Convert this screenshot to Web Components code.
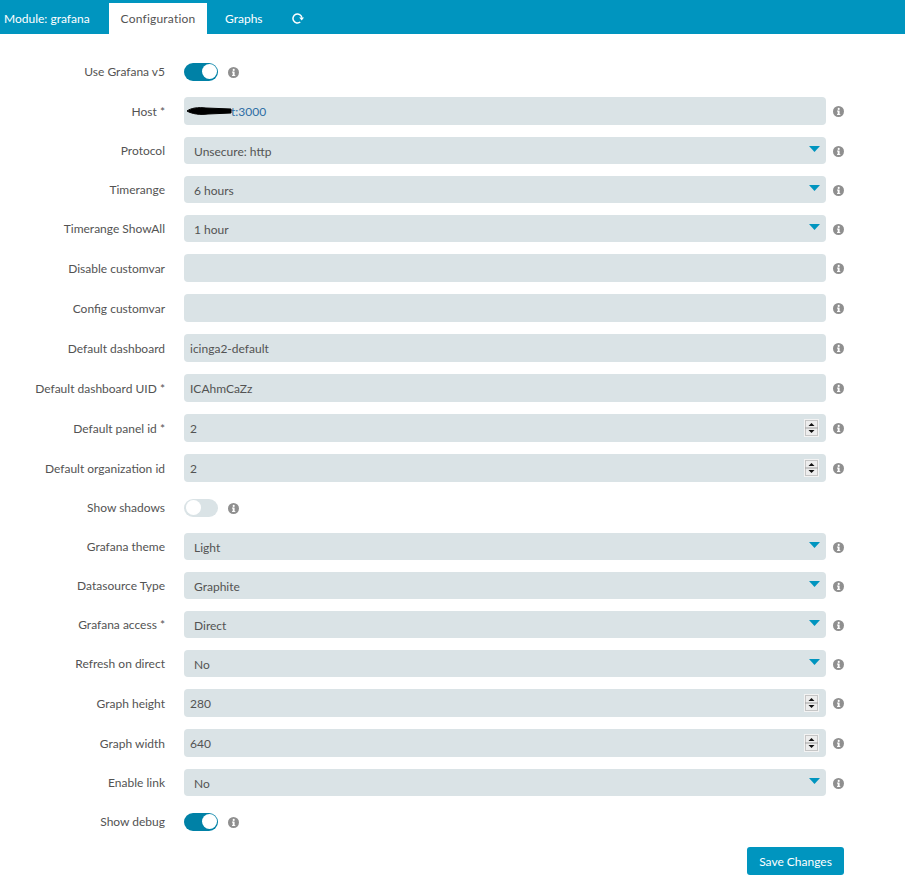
<!DOCTYPE html>
<html>
<head>
<meta charset="utf-8">
<title>Module: grafana</title>
<style>
    html, body { margin: 0; padding: 0; background: #fff; }
    body { font-family: Lato, "Open Sans", sans-serif; font-size: 12px; color: #535353; }
</style>
</head>
<body>
<module-tabs></module-tabs>
<config-form>
    <form-row label="Use Grafana v5"><toggle-switch on></toggle-switch></form-row>
    <form-row label="Host *" wide><text-field redacted value="t:3000"></text-field></form-row>
    <form-row label="Protocol" wide><select-field value="Unsecure: http"></select-field></form-row>
    <form-row label="Timerange" wide><select-field value="6 hours"></select-field></form-row>
    <form-row label="Timerange ShowAll" wide><select-field value="1 hour"></select-field></form-row>
    <form-row label="Disable customvar" wide><text-field></text-field></form-row>
    <form-row label="Config customvar" wide><text-field></text-field></form-row>
    <form-row label="Default dashboard" wide><text-field value="icinga2-default"></text-field></form-row>
    <form-row label="Default dashboard UID *" wide><text-field value="ICAhmCaZz"></text-field></form-row>
    <form-row label="Default panel id *" wide><text-field number value="2"></text-field></form-row>
    <form-row label="Default organization id" wide><text-field number value="2"></text-field></form-row>
    <form-row label="Show shadows"><toggle-switch></toggle-switch></form-row>
    <form-row label="Grafana theme" wide><select-field value="Light"></select-field></form-row>
    <form-row label="Datasource Type" wide><select-field value="Graphite"></select-field></form-row>
    <form-row label="Grafana access *" wide><select-field value="Direct"></select-field></form-row>
    <form-row label="Refresh on direct" wide><select-field value="No"></select-field></form-row>
    <form-row label="Graph height" wide><text-field number value="280"></text-field></form-row>
    <form-row label="Graph width" wide><text-field number value="640"></text-field></form-row>
    <form-row label="Enable link" wide><select-field value="No"></select-field></form-row>
    <form-row label="Show debug"><toggle-switch on></toggle-switch></form-row>
</config-form>
<script>
class ModuleTabs extends HTMLElement {
    constructor() {
        super();
        this.attachShadow({mode: "open"}).innerHTML = `
            <style>
                :host { display: flex; height: 34px; background: #0095bf; color: #fff; box-sizing: border-box; padding-top: 3px; }
                span { display: flex; align-items: center; height: 31px; padding-bottom: 1px; box-sizing: border-box; }
                .title { padding-left: 4px; width: 109px; box-sizing: border-box; }
                .active { background: #fff; color: #535353; width: 98px; justify-content: center; letter-spacing: .2px; }
                .graphs { padding-left: 18px; width: 72px; }
                svg { display: block; }
            </style>
            <span class="title">Module: grafana</span>
            <span class="active">Configuration</span>
            <span class="graphs">Graphs</span>
            <span class="reload">
                <svg width="12" height="12" viewBox="0 0 12 12" style="margin-left:13px">
                    <path d="M8.3 10A4.5 4.5 0 1 1 9.9 5.6" fill="none" stroke="#fff" stroke-width="1.5"/>
                    <path d="M7.2 5.4H12L9.7 8.6z" fill="#fff"/>
                </svg>
            </span>`;
    }
}
class ConfigForm extends HTMLElement {
    constructor() {
        super();
        this.attachShadow({mode: "open"}).innerHTML = `
            <style>
                :host { display: block; padding-top: 24px; }
                .rows { display: flex; flex-direction: column; gap: 12px; }
                .actions { display: flex; justify-content: flex-end; padding: 12px 61px 0 0; }
                button {
                    width: 97px; height: 28px; border: 0; border-radius: 3px; padding: 0;
                    background: #0095bf; color: #fff; font: inherit;
                }
            </style>
            <div class="rows"><slot></slot></div>
            <div class="actions"><button type="button">Save Changes</button></div>`;
    }
}
class FormRow extends HTMLElement {
    constructor() {
        super();
        this.attachShadow({mode: "open"}).innerHTML = `
            <style>
                :host { display: flex; align-items: center; min-height: 27px; }
                label { width: 165px; margin-right: 19px; text-align: right; flex: none; white-space: nowrap; }
                .control { flex: none; }
                :host([wide]) .control { width: 642px; }
                .info { margin: 9px 0 0 10px; align-self: flex-start; display: block; flex: none; }
                :host([wide]) .info { margin-left: 6.5px; }
            </style>
            <label></label>
            <div class="control"><slot></slot></div>
            <svg class="info" width="11" height="11" viewBox="0 0 11 11">
                <circle cx="5.5" cy="5.5" r="5.5" fill="#8f8f8f"/>
                <rect x="4.7" y="4.6" width="1.9" height="4.2" fill="#fff"/>
                <rect x="4" y="4.6" width="1.5" height="1" fill="#fff"/>
                <rect x="4" y="8" width="3.3" height="0.9" fill="#fff"/>
                <circle cx="5.7" cy="2.9" r="1.05" fill="#fff"/>
            </svg>`;
        this.shadowRoot.querySelector("label").textContent = this.getAttribute("label");
    }
}
class ToggleSwitch extends HTMLElement {
    constructor() {
        super();
        this.attachShadow({mode: "open"}).innerHTML = `
            <style>
                :host { display: block; width: 34px; height: 18px; border-radius: 9px; background: #dae3e6; position: relative; }
                :host([on]) { background: #0081a6; }
                i { position: absolute; top: 1.5px; left: 1.5px; width: 15px; height: 15px; border-radius: 50%; background: #fff; }
                :host([on]) i { left: 17.5px; }
            </style>
            <i></i>`;
    }
}
class TextField extends HTMLElement {
    constructor() {
        super();
        const value = this.getAttribute("value") || "";
        this.attachShadow({mode: "open"}).innerHTML = `
            <style>
                :host { display: flex; align-items: center; height: 28px; background: #dae3e6; border-radius: 4px; padding: 0 6px; position: relative; box-sizing: border-box; }
                .stepper { position: absolute; right: 7px; top: 5px; width: 15px; height: 18px; background: #ededed; border: 1px solid #f3f3f3; box-sizing: border-box; }
                .stepper svg { display: block; }
                :host([redacted]) .value { color: #2f6ea5; margin-left: 41px; }
                .scribble { position: absolute; left: 2px; top: 9px; }
            </style>
            <span class="value">${value}</span>
            ${this.hasAttribute("redacted") ? `<svg class="scribble" width="46" height="10" viewBox="0 0 46 10">
                <path d="M1 5C5 2 12 1 20 2L45 3 45 7 22 8C14 9 6 8 1 5z" fill="#000" stroke="#000"/>
            </svg>` : ""}
            ${this.hasAttribute("number") ? `<div class="stepper"><svg width="13" height="16" viewBox="0 0 13 16">
                <path d="M.5 0V16M12.5 0V16M0 .5H13M0 15.5H13" fill="none" stroke="#c6c6c6"/>
                <rect x="0" y="7.5" width="13" height="1" fill="#a0a0a0"/>
                <path d="M6.5 3L9.5 6H3.5z" fill="#111"/>
                <path d="M6.5 13L9.5 10H3.5z" fill="#111"/>
            </svg></div>` : ""}`;
    }
}
class SelectField extends HTMLElement {
    constructor() {
        super();
        this.attachShadow({mode: "open"}).innerHTML = `
            <style>
                :host { display: flex; align-items: center; justify-content: space-between; height: 27px; background: #dae3e6; border-radius: 4px; padding: 0 6px 0 10px; box-sizing: border-box; }
                span { padding-top: 1px; }
                svg { display: block; margin-top: -3px; }
            </style>
            <span>${this.getAttribute("value")}</span>
            <svg width="11" height="6" viewBox="0 0 11 6"><path d="M0 0H11L5.5 6z" fill="#0095bf"/></svg>`;
    }
}
customElements.define("module-tabs", ModuleTabs);
customElements.define("config-form", ConfigForm);
customElements.define("form-row", FormRow);
customElements.define("toggle-switch", ToggleSwitch);
customElements.define("text-field", TextField);
customElements.define("select-field", SelectField);
</script>
</body>
</html>
